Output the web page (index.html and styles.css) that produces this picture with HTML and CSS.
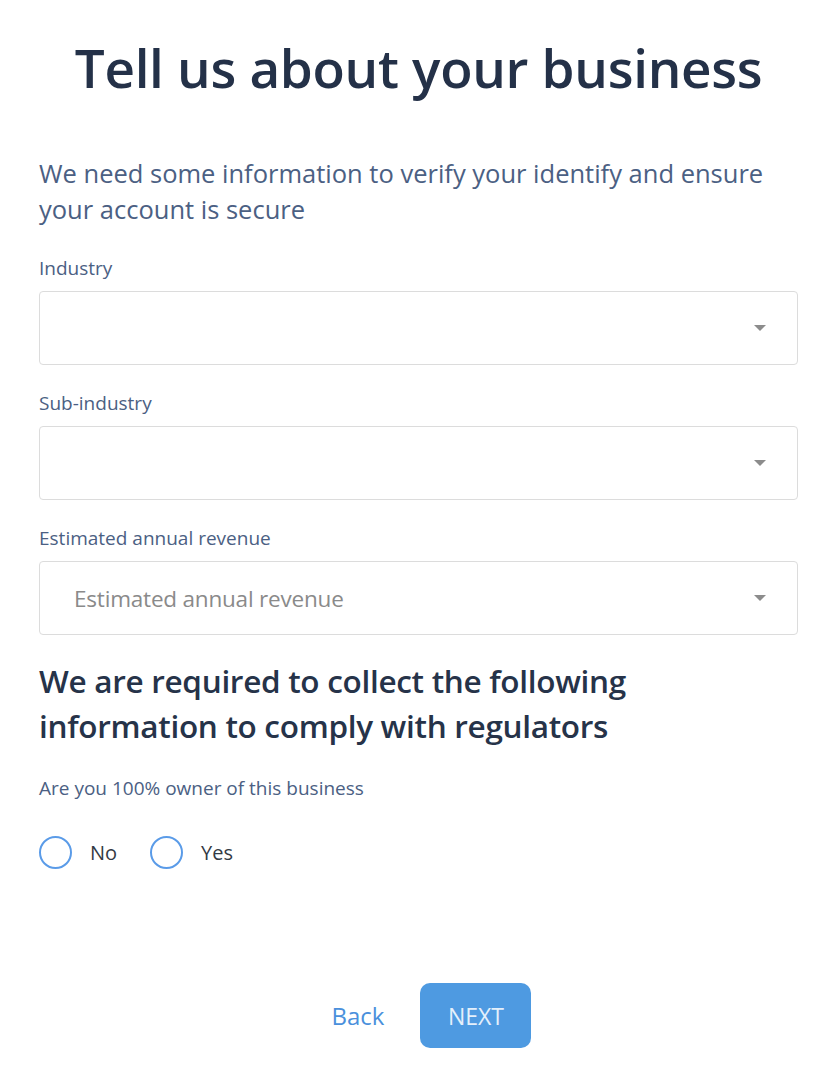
FILE: index.html
```html
<!DOCTYPE html>
<html lang="en">
<head>
<meta charset="utf-8">
<title>Tell us about your business</title>
<link rel="stylesheet" href="styles.css">
</head>
<body>
<main class="page">
  <h1 class="title">Tell us about your business</h1>
  <p class="intro">We need some information to verify your identify and ensure your account is secure</p>

  <div class="field">
    <label class="label">Industry</label>
    <div class="select"><span class="value"></span><span class="caret"></span></div>
  </div>

  <div class="field">
    <label class="label">Sub-industry</label>
    <div class="select"><span class="value"></span><span class="caret"></span></div>
  </div>

  <div class="field">
    <label class="label">Estimated annual revenue</label>
    <div class="select"><span class="value placeholder">Estimated annual revenue</span><span class="caret"></span></div>
  </div>

  <h2 class="subhead">We are required to collect the following information to comply with regulators</h2>

  <p class="label question">Are you 100% owner of this business</p>
  <div class="radios">
    <label class="radio"><span class="circle"></span><span class="radio-text">No</span></label>
    <label class="radio"><span class="circle"></span><span class="radio-text">Yes</span></label>
  </div>

  <div class="actions">
    <button class="btn-back">Back</button>
    <button class="btn-next">NEXT</button>
  </div>
</main>
</body>
</html>
```

FILE: styles.css
```css
* { box-sizing: border-box; }
html, body { margin: 0; padding: 0; background: #ffffff; }
body {
  font-family: "Open Sans", "Noto Sans", sans-serif;
  color: #263349;
}
.page {
  width: 824px;
  padding: 0 26px 0 39px;
  display: flex;
  flex-direction: column;
}
.title {
  margin: 34px 0 0;
  text-align: center;
  font-size: 53px;
  line-height: 68px;
  font-weight: 600;
  color: #243148;
  letter-spacing: -0.3px;
}
.intro {
  margin: 53px 0 0;
  font-size: 25.5px;
  line-height: 36px;
  color: #4b6083;
  letter-spacing: 0;
}
.field { display: flex; flex-direction: column; }
.label {
  margin: 0;
  font-size: 19px;
  line-height: 24px;
  color: #4b6083;
  letter-spacing: 0;
}
.field:first-of-type { margin-top: 29px; }
.field + .field { margin-top: 26px; }
.field .label { margin-bottom: 11px; }
.select {
  height: 74px;
  border: 1.5px solid #dcdcdc;
  border-radius: 4px;
  display: flex;
  align-items: center;
  justify-content: space-between;
  padding: 0 31px 0 34px;
}
.value { font-size: 22.5px; color: #8a8a8a; letter-spacing: -0.2px; }
.caret {
  width: 0; height: 0;
  border-left: 6px solid transparent;
  border-right: 6px solid transparent;
  border-top: 6px solid #8c8c8c;
}
.subhead {
  margin: 23px 0 0;
  max-width: 660px;
  font-size: 31.5px;
  line-height: 45px;
  font-weight: 600;
  color: #263349;
  letter-spacing: -0.3px;
}
.question { margin-top: 28px; }
.radios {
  margin-top: 36px;
  display: flex;
  gap: 33px;
}
.radio { display: flex; align-items: center; gap: 18px; }
.circle {
  width: 33px; height: 33px;
  border: 2px solid #5a9be8;
  border-radius: 50%;
}
.radio-text { font-size: 20px; color: #333a44; }
.actions {
  margin-top: 114px;
  display: flex;
  justify-content: center;
  align-items: center;
  gap: 36px;
  padding-left: 26px;
}
.btn-back {
  border: 0; background: none; padding: 0;
  font-family: inherit;
  font-size: 24px;
  color: #4a90dc;
}
.btn-next {
  border: 0;
  width: 111px; height: 65px;
  border-radius: 10px;
  background: #4e9ae1;
  font-family: inherit;
  font-size: 23px;
  color: #e4f0fb;
}
```
